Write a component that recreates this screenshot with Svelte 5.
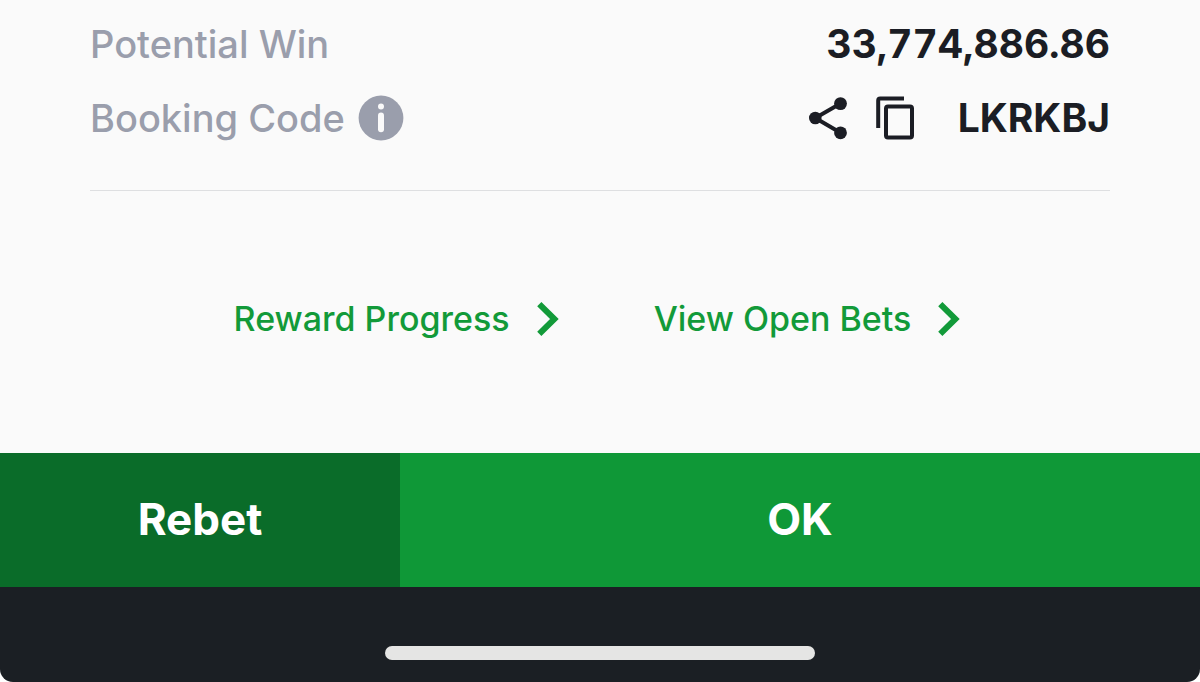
<script>
  const potentialWin = '33,774,886.86';
  const bookingCode = 'LKRKBJ';
  const links = ['Reward Progress', 'View Open Bets'];
</script>

<main class="screen">
  <section class="summary">
    <div class="row">
      <span class="label">Potential Win</span>
      <strong class="value">{potentialWin}</strong>
    </div>
    <div class="row">
      <span class="label">
        Booking Code
        <button class="icon" type="button" aria-label="About booking codes">
          <svg width="46" height="46" viewBox="0 0 46 46" aria-hidden="true">
            <circle cx="23" cy="23" r="22.4" fill="#9a9eac" />
            <circle cx="23" cy="11.6" r="3" fill="#fafafa" />
            <path d="M23 20.4V34.2" stroke="#fafafa" stroke-width="6" stroke-linecap="round" />
          </svg>
        </button>
      </span>
      <span class="code">
        <button class="icon" type="button" aria-label="Share">
          <svg width="38" height="44" viewBox="0 0 38 44" aria-hidden="true">
            <path d="M31.5 7.6 6.3 22 31.5 36.8" fill="none" stroke="#1b1d24" stroke-width="4" />
            <circle cx="31.5" cy="7.6" r="6.4" fill="#1b1d24" />
            <circle cx="6.3" cy="22" r="6.3" fill="#1b1d24" />
            <circle cx="31.5" cy="36.8" r="6.4" fill="#1b1d24" />
          </svg>
        </button>
        <button class="icon" type="button" aria-label="Copy">
          <svg width="38" height="44" viewBox="0 0 38 44" aria-hidden="true">
            <g fill="none" stroke="#1b1d24" stroke-width="4">
              <path d="M2.2 32V4.4Q2.2 2.6 4.2 2.6H28" />
              <rect x="10" y="10.6" width="26" height="31" rx="2" />
            </g>
          </svg>
        </button>
        <strong class="value">{bookingCode}</strong>
      </span>
    </div>
  </section>

  <nav class="links">
    {#each links as link}
      <a href="#top">
        {link}
        <svg width="22" height="34" viewBox="0 0 22 34" aria-hidden="true">
          <path d="M2.3 2.2 17.4 17 2.3 31.8" fill="none" stroke="#129a39" stroke-width="6" />
        </svg>
      </a>
    {/each}
  </nav>

  <div class="actions">
    <button class="rebet" type="button">Rebet</button>
    <button class="ok" type="button">OK</button>
  </div>

  <footer><span class="home"></span></footer>
</main>

<style>
  :global(body) {
    background: #fff;
  }

  .screen {
    display: flex;
    flex-direction: column;
    min-height: 100vh;
    overflow: hidden;
    border-radius: 0 0 13px 13px;
    background: #fafafa;
    color: #1b1d24;
    font-family: Inter, Roboto, sans-serif;
  }

  button {
    border: 0;
    padding: 0;
    background: none;
    color: inherit;
    font: inherit;
    cursor: pointer;
  }

  svg {
    display: block;
  }

  .summary {
    display: flex;
    flex-direction: column;
    gap: 28px;
    margin: 0 90px;
    padding: 21px 0 49px;
    border-bottom: 1px solid #dedfe1;
  }

  .row {
    display: flex;
    align-items: center;
    justify-content: space-between;
    height: 46px;
    font-size: 38px;
    line-height: 46px;
  }

  .label,
  .code {
    display: flex;
    align-items: center;
    gap: 13px;
  }

  .label {
    color: #9a9eac;
    font-weight: 500;
  }

  .value {
    font-size: 39px;
    font-weight: 700;
    font-variant-numeric: tabular-nums;
  }

  .code {
    gap: 29px;
  }

  .code .value {
    margin-left: 15px;
  }

  .links {
    display: flex;
    flex: 1;
    align-items: center;
    justify-content: center;
    gap: 95px;
    padding: 0 6px 6px 0;
  }

  .links a {
    display: flex;
    align-items: center;
    gap: 27px;
    color: #129a39;
    font-size: 34px;
    font-weight: 500;
    line-height: 40px;
    text-decoration: none;
  }

  .actions {
    display: grid;
    grid-template-columns: 1fr 2fr;
    color: #fff;
    font-size: 44px;
    font-weight: 700;
    line-height: 54px;
  }

  .actions button {
    padding: 39px 0 41px;
  }

  .rebet {
    background: #0a6c29;
  }

  .ok {
    background: #0f9837;
  }

  footer {
    display: flex;
    justify-content: center;
    padding: 59px 0 22px;
    background: #1b1f24;
  }

  .home {
    width: 430px;
    height: 14px;
    border-radius: 7px;
    background: #e5e5e4;
  }
</style>
